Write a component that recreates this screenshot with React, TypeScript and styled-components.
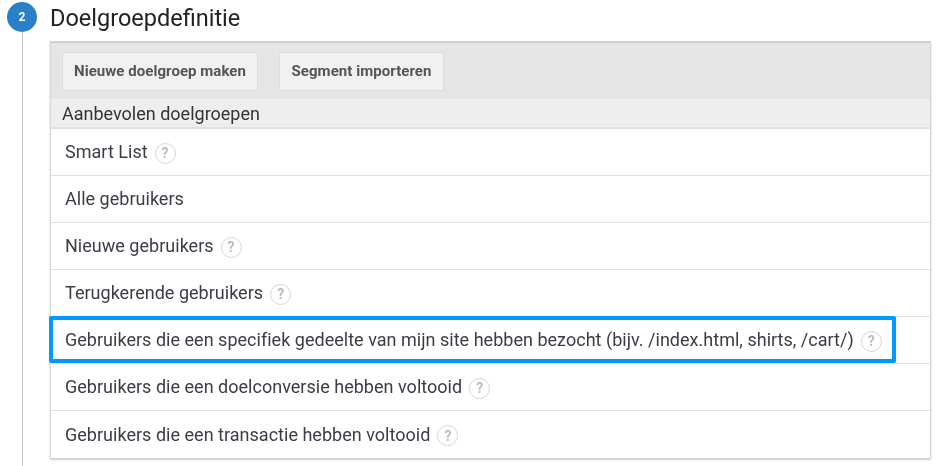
import * as React from 'react';
import styled, { createGlobalStyle } from 'styled-components';

const GlobalStyle = createGlobalStyle`
  html, body {
    margin: 0;
    padding: 0;
    background: #fff;
    font-family: Roboto, "Liberation Sans", sans-serif;
  }
`;

const Page = styled.div`
  width: 945px;
  height: 466px;
  overflow: hidden;
  display: flex;
  padding-left: 7px;
  box-sizing: border-box;
  filter: blur(0.35px);
`;

const Rail = styled.div`
  width: 30px;
  display: flex;
  flex-direction: column;
  align-items: center;
  padding-top: 2px;
  flex-shrink: 0;
`;

const Badge = styled.div`
  width: 30px;
  height: 30px;
  border-radius: 50%;
  background: #2a7fc9;
  color: #fff;
  font-size: 12px;
  font-weight: 700;
  display: flex;
  align-items: center;
  justify-content: center;
  flex-shrink: 0;
`;

const RailLine = styled.div`
  width: 1px;
  flex: 1;
  background: #c8c8c8;
`;

const Main = styled.div`
  margin-left: 13px;
  width: 881px;
`;

const Title = styled.h2`
  margin: 0;
  height: 41px;
  padding-top: 5px;
  box-sizing: border-box;
  font-size: 23.5px;
  line-height: 26px;
  font-weight: 400;
  color: #222;
`;

const Panel = styled.div`
  border-top: 2px solid #cfcfcf;
  border-right: 1px solid #d4d4d4;
  border-left: 1px solid #d8d8d8;
  box-shadow: 0 2px 2px rgba(0, 0, 0, 0.2);
  background: #fff;
`;

const Toolbar = styled.div`
  height: 56px;
  box-sizing: border-box;
  background: #e5e5e5;
  display: flex;
  gap: 21px;
  padding: 9px 0 0 11px;
`;

const ToolButton = styled.button<{ $width: number }>`
  width: ${(p) => p.$width}px;
  height: 39px;
  padding: 0 0 1px;
  background: #f1f1f1;
  border: 1px solid #dcdcdc;
  border-radius: 2px;
  font-family: inherit;
  font-size: 15px;
  font-weight: 700;
  letter-spacing: 0.05px;
  color: #555;
`;

const SectionHead = styled.div`
  height: 30px;
  box-sizing: border-box;
  padding-left: 11px;
  background: #eee;
  border-bottom: 2px solid #e0e0e0;
  font-size: 18px;
  line-height: 29px;
  color: #333;
`;

const Row = styled.div`
  position: relative;
  height: 47px;
  box-sizing: border-box;
  padding: 0 0 1px 14px;
  border-bottom: 1px solid #e0e0e0;
  display: flex;
  align-items: center;
  gap: 7px;
  font-size: 18px;
  letter-spacing: 0.02px;
  color: #3c3c46;

  &:last-child {
    border-bottom: 0;
  }
`;

const Help = styled.span`
  width: 21px;
  height: 21px;
  box-sizing: border-box;
  border: 1px solid #d6d6d6;
  border-radius: 50%;
  display: flex;
  align-items: center;
  justify-content: center;
  font-size: 14px;
  font-weight: 700;
  color: #bcbcbc;
  flex-shrink: 0;
  margin-top: 3px;
`;

const Highlight = styled.div`
  position: absolute;
  left: -2px;
  top: -1px;
  width: 847px;
  height: 47px;
  box-sizing: border-box;
  border: 4.5px solid #0099ff;
  border-radius: 2px;
`;

const rows = [
  { label: 'Smart List', help: true },
  { label: 'Alle gebruikers', help: false },
  { label: 'Nieuwe gebruikers', help: true },
  { label: 'Terugkerende gebruikers', help: true },
  {
    label: 'Gebruikers die een specifiek gedeelte van mijn site hebben bezocht (bijv. /index.html, shirts, /cart/)',
    help: true,
    marked: true,
  },
  { label: 'Gebruikers die een doelconversie hebben voltooid', help: true },
  { label: 'Gebruikers die een transactie hebben voltooid', help: true },
];

export default function App() {
  return (
    <Page>
      <GlobalStyle />
      <Rail>
        <Badge>2</Badge>
        <RailLine />
      </Rail>
      <Main>
        <Title>Doelgroepdefinitie</Title>
        <Panel>
          <Toolbar>
            <ToolButton $width={196}>Nieuwe doelgroep maken</ToolButton>
            <ToolButton $width={165}>Segment importeren</ToolButton>
          </Toolbar>
          <SectionHead>Aanbevolen doelgroepen</SectionHead>
          {rows.map((row) => (
            <Row key={row.label}>
              <span>{row.label}</span>
              {row.help && <Help>?</Help>}
              {row.marked && <Highlight />}
            </Row>
          ))}
        </Panel>
      </Main>
    </Page>
  );
}
